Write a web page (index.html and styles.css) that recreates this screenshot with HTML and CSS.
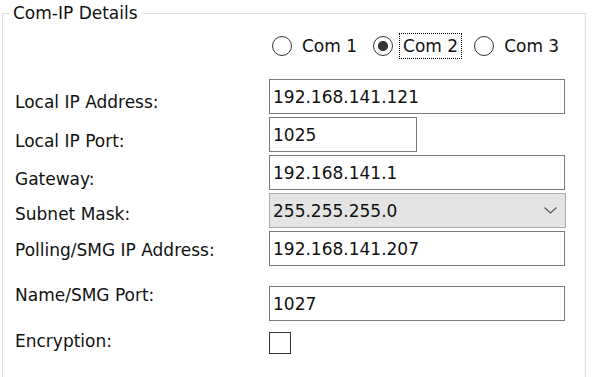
FILE: index.html
```html
<!DOCTYPE html>
<html lang="en">
<head>
  <meta charset="UTF-8" />
  <meta name="viewport" content="width=device-width, initial-scale=1.0" />
  <title>Com-IP Details</title>
  <link rel="stylesheet" href="styles.css">
</head>
<body>
  <fieldset class="group">
    <legend>Com-IP Details</legend>

    <div class="radios">
      <label class="radio">
        <input type="radio" name="com" value="1" />
        <span class="caption">Com 1</span>
      </label>
      <label class="radio">
        <input type="radio" name="com" value="2" checked />
        <span class="caption focused">Com 2</span>
      </label>
      <label class="radio">
        <input type="radio" name="com" value="3" />
        <span class="caption">Com 3</span>
      </label>
    </div>

    <div class="fields">
      <div class="row">
        <label class="name pt13" for="localIp">Local IP Address:</label>
        <input type="text" id="localIp" class="box" value="192.168.141.121" />
      </div>
      <div class="row">
        <label class="name pt14" for="localPort">Local IP Port:</label>
        <input type="text" id="localPort" class="box short" value="1025" />
      </div>
      <div class="row">
        <label class="name pt14" for="gateway">Gateway:</label>
        <input type="text" id="gateway" class="box" value="192.168.141.1" />
      </div>
      <div class="row">
        <label class="name pt11">Subnet Mask:</label>
        <div class="combo">
          <span>255.255.255.0</span>
          <svg width="13" height="7" viewBox="0 0 13 7">
            <polyline points="0.5,0.5 6.5,6 12.5,0.5" fill="none" stroke="#5a5a5a" stroke-width="1.2" />
          </svg>
        </div>
      </div>
      <div class="row">
        <label class="name pt9" for="pollingIp">Polling/SMG IP Address:</label>
        <input type="text" id="pollingIp" class="box" value="192.168.141.207" />
      </div>
      <div class="row row-name">
        <label class="name" for="smgPort">Name/SMG Port:</label>
        <input type="text" id="smgPort" class="box nudge" value="1027" />
      </div>
      <div class="row row-enc">
        <label class="name" for="encryption">Encryption:</label>
        <input type="checkbox" id="encryption" class="check nudge" />
      </div>
    </div>
  </fieldset>
</body>
</html>
```

FILE: styles.css
```css
html, body {
  margin: 0;
  background: #fff;
}
body {
  font-family: "DejaVu Sans", Verdana, sans-serif;
  font-size: 17px;
  line-height: 20px;
  color: #111;
}
.group {
  margin: 3px 0 0 2px;
  width: 584px;
  box-sizing: border-box;
  padding: 10px 0 23px 0;
  border: 1px solid #dcdcdc;
  border-bottom: none;
  min-inline-size: 0;
}
.group legend {
  margin-left: 7px;
  padding: 0 3px;
}
.radios {
  display: flex;
  align-items: center;
  padding-left: 269px;
  height: 26px;
}
.radio {
  display: flex;
  align-items: center;
  margin-right: 12px;
}
.radio input {
  appearance: none;
  margin: 0 6px 0 0;
  width: 20px;
  height: 20px;
  border: 1px solid #333;
  border-radius: 50%;
  background: #fff;
}
.radio input:checked {
  background: radial-gradient(circle, #333 0 4.6px, #fff 5.4px);
}
.caption {
  padding: 2px 3px;
  border: 1px dotted transparent;
}
.caption.focused {
  border-color: #000;
}
.fields {
  margin-top: 20px;
  display: flex;
  flex-direction: column;
  gap: 3px;
}
.row {
  display: flex;
  align-items: flex-start;
}
.name {
  width: 266px;
  box-sizing: border-box;
  padding-left: 12px;
}
.pt9 { padding-top: 9px; }
.pt11 { padding-top: 11px; }
.pt13 { padding-top: 13px; }
.pt14 { padding-top: 14px; }
.row-name { margin-top: 16px; }
.row-enc { margin-top: 7px; }
.nudge { margin-top: 1px !important; }
.box {
  width: 296px;
  height: 35px;
  box-sizing: border-box;
  margin: 0;
  padding: 0 3px;
  border: 1px solid #7a7a7a;
  border-radius: 0;
  font: inherit;
  color: #111;
  background: #fff;
  outline: none;
}
.box.short {
  width: 148px;
}
.combo {
  width: 297px;
  height: 35px;
  box-sizing: border-box;
  display: flex;
  align-items: center;
  justify-content: space-between;
  padding: 0 8px 0 3px;
  border: 1px solid #adadad;
  background: #e4e4e4;
}
.check {
  appearance: none;
  margin: 0;
  width: 22px;
  height: 22px;
  border: 1px solid #333;
  background: #fff;
}
```
